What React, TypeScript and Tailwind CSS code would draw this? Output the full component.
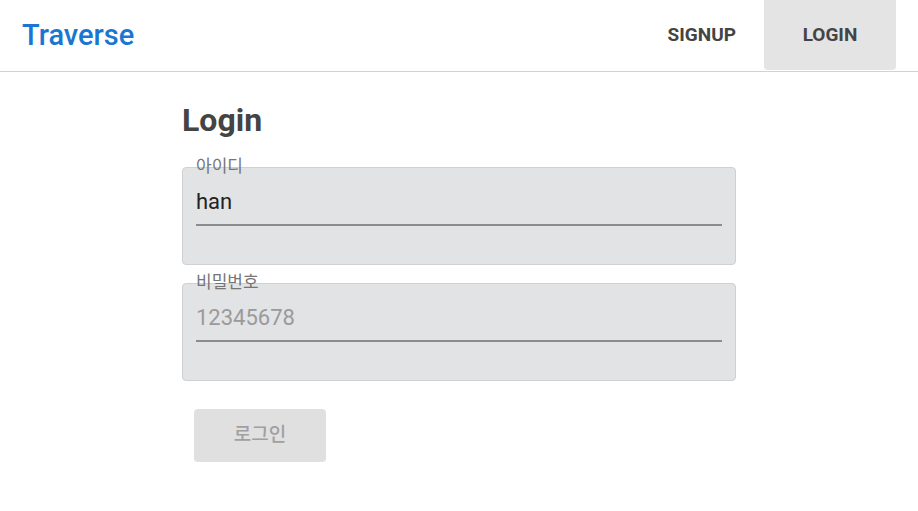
import React from "react";

const font = { fontFamily: '"Roboto", "Noto Sans CJK KR", sans-serif' };

function Field({ label, value, placeholder }: { label: string; value?: string; placeholder?: string }) {
  return (
    <div className="relative w-[554px]">
      <div className="rounded-[4px] border border-[#cfd0d2] bg-[#e2e3e5] px-[13px] pt-[16px] pb-[38px]">
        <div className={`text-[22px] leading-[36px] ${value ? "text-[#222]" : "text-[#9a9a9a]"}`}>
          {value ?? placeholder}
        </div>
        <div className="mt-[4px] h-[2px] bg-[#8c8c8c]" />
      </div>
      <span className="absolute left-[14px] top-[-9px] text-[17px] leading-[17px] text-[#757575]">{label}</span>
    </div>
  );
}

export default function App() {
  return (
    <div className="min-h-[511px] bg-white" style={font}>
      <header className="flex h-[72px] items-start justify-between border-b border-[#d2d2d2] pl-[22px] pr-[22px]">
        <div className="flex h-[71px] items-center text-[29px] font-medium text-[#1976d2]">Traverse</div>
        <nav className="flex items-start">
          <button className="flex h-[70px] items-center px-[28px] text-[19px] font-bold text-[#444]">SIGNUP</button>
          <button className="flex h-[70px] w-[132px] items-center justify-center rounded-b-[4px] bg-[#e4e4e4] text-[19px] font-bold text-[#444]">
            LOGIN
          </button>
        </nav>
      </header>
      <main className="ml-[182px] flex flex-col pt-[29px]">
        <h1 className="text-[32px] font-bold leading-[38px] text-[#444]">Login</h1>
        <div className="mt-[28px]">
          <Field label="아이디" value="han" />
        </div>
        <div className="mt-[18px]">
          <Field label="비밀번호" placeholder="12345678" />
        </div>
        <button className="ml-[12px] mt-[28px] flex h-[53px] w-[132px] items-center justify-center rounded-[4px] bg-[#e0e0e0] text-[19px] font-medium text-[#a0a0a0]">
          로그인
        </button>
      </main>
    </div>
  );
}
